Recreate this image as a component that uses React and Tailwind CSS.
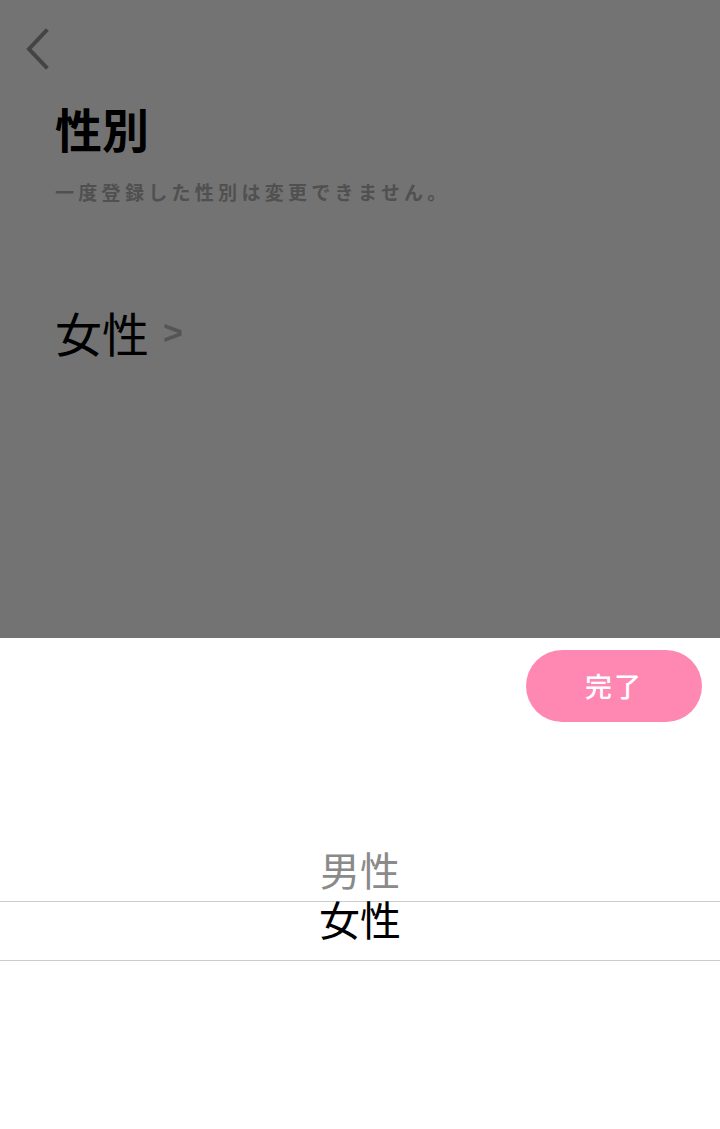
const jp = { fontFamily: '"Noto Sans CJK JP", "Noto Sans", sans-serif' };

function BackIcon() {
  return (
    <svg width="28" height="42" viewBox="0 0 28 42" fill="none">
      <path d="M24 3 L7 21 L24 39" stroke="#444444" strokeWidth="4" strokeLinecap="square" />
    </svg>
  );
}

export default function App() {
  return (
    <div className="w-[720px] h-[1129px] flex flex-col bg-white overflow-hidden" style={jp}>
      {/* dimmed page behind the sheet */}
      <div className="h-[638px] bg-[#737373] flex flex-col">
        <div className="pt-[28px] pl-[22px]">
          <BackIcon />
        </div>
        <div className="pl-[55px]">
          <h1 className="mt-[26px] text-[47px] leading-[64px] font-bold text-black">性別</h1>
          <p className="mt-[19px] text-[19px] leading-[26px] font-bold tracking-[4.3px] text-[#505050]">
            一度登録した性別は変更できません。
          </p>
          <div className="mt-[97px] flex items-center gap-[14px]">
            <span className="text-[47px] leading-[60px] text-black">女性</span>
            <span className="text-[34px] leading-[60px] font-bold text-[#555555]" style={{ fontFamily: '"Liberation Sans", sans-serif' }}>&gt;</span>
          </div>
        </div>
      </div>

      {/* picker sheet */}
      <div className="flex-1 flex flex-col">
        <div className="flex justify-end pt-[12px] pr-[18px]">
          <button className="w-[176px] h-[72px] rounded-full bg-[#ff88b2] text-white text-[27px] font-medium tracking-[2px]">
            完了
          </button>
        </div>
        <div className="mt-[127px] flex flex-col items-center">
          <div className="text-[40px] leading-[40px] pb-[12px] text-[#8a8a8a]">男性</div>
          <div className="w-full h-[60px] border-y border-[#cccccc] flex justify-center">
            <span className="text-[41px] leading-[32px] text-black">女性</span>
          </div>
        </div>
      </div>
    </div>
  );
}
